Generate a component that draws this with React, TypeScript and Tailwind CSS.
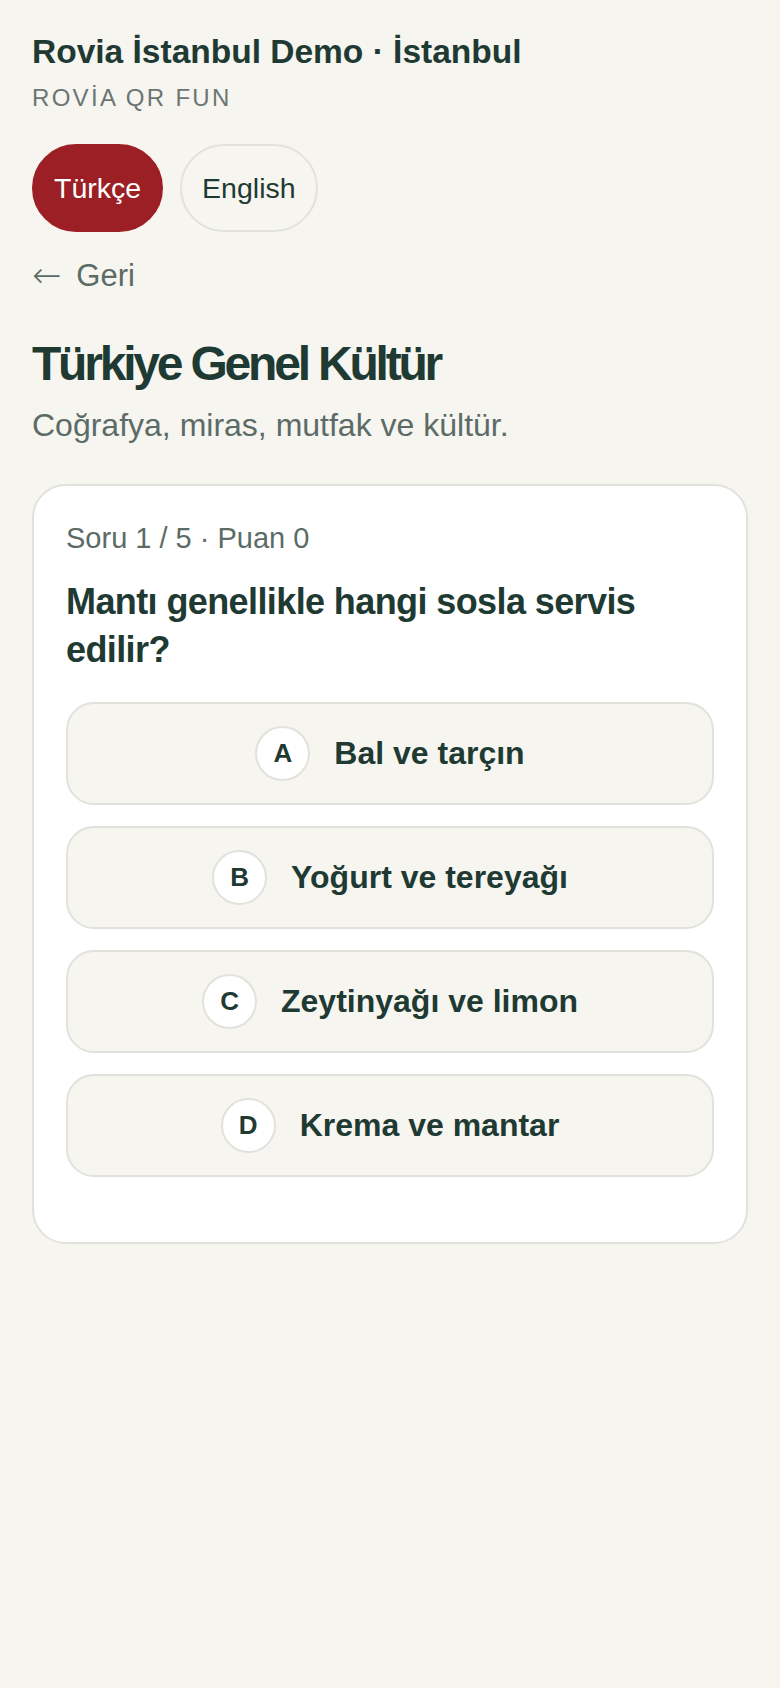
import { useState } from "react";

const options = [
  { key: "A", label: "Bal ve tarçın" },
  { key: "B", label: "Yoğurt ve tereyağı" },
  { key: "C", label: "Zeytinyağı ve limon" },
  { key: "D", label: "Krema ve mantar" },
];

export default function App() {
  const [lang, setLang] = useState<"tr" | "en">("tr");

  return (
    <div className="min-h-screen bg-[#f6f5f0] px-[32px] pt-[32px] pb-10 font-['Liberation_Sans',Arial,sans-serif] text-[#1f3a33]">
      <h2 className="text-[33.5px] font-bold leading-[39.6px]">Rovia İstanbul Demo · İstanbul</h2>
      <p className="mt-[8px] text-[24px] leading-[36px] tracking-[2.3px] text-[#6b7572]">ROVİA QR FUN</p>

      <div className="mt-[28px] flex gap-[17px]">
        <button
          onClick={() => setLang("tr")}
          className={
            lang === "tr"
              ? "rounded-full border-2 border-[#9b1f24] bg-[#9b1f24] px-[20px] py-[21px] text-[28.5px] leading-[42px] text-white"
              : "rounded-full border-2 border-[#e2e2dc] bg-transparent px-[20px] py-[21px] text-[28.5px] leading-[42px] text-[#1f3a33]"
          }
        >
          Türkçe
        </button>
        <button
          onClick={() => setLang("en")}
          className={
            lang === "en"
              ? "rounded-full border-2 border-[#9b1f24] bg-[#9b1f24] px-[20px] py-[21px] text-[28.5px] leading-[42px] text-white"
              : "rounded-full border-2 border-[#e2e2dc] bg-transparent px-[20px] py-[21px] text-[28.5px] leading-[42px] text-[#1f3a33]"
          }
        >
          English
        </button>
      </div>

      <a href="#" className="mt-[21px] flex items-center gap-[15px] text-[31px] leading-[45px] text-[#5c6b66]">
        <span className="font-['DejaVu_Sans',sans-serif] text-[35px] font-light leading-[45px]">←</span>
        <span>Geri</span>
      </a>

      <h1 className="mt-[37px] text-[48px] font-bold leading-[57.6px] tracking-[-3.2px]">Türkiye Genel Kültür</h1>
      <p className="mt-[9px] text-[32px] leading-[48px] text-[#5c6b66]">Coğrafya, miras, mutfak ve kültür.</p>

      <div className="mt-[35px] rounded-[34px] border-2 border-[#e2e2dc] bg-white p-[32px]">
        <p className="text-[29px] leading-[40px] text-[#5c6b66]">Soru 1 / 5 · Puan 0</p>
        <h3 className="mt-[20px] text-[36px] font-bold leading-[47.7px] tracking-[-0.6px]">
          Mantı genellikle hangi sosla servis edilir?
        </h3>

        <div className="mt-[28px] mb-[33px] flex flex-col gap-[21px]">
          {options.map((o) => (
            <button
              key={o.key}
              className="flex h-[103px] items-center justify-center gap-[24px] rounded-[28px] border-2 border-[#e2e2dc] bg-[#f6f5f0] text-[#1f3a33]"
            >
              <span className="flex h-[55px] w-[55px] items-center justify-center rounded-full border-2 border-[#e2e2dc] bg-white text-[26px] font-bold">
                {o.key}
              </span>
              <span className="text-[32px] font-bold">{o.label}</span>
            </button>
          ))}
        </div>
      </div>
    </div>
  );
}
